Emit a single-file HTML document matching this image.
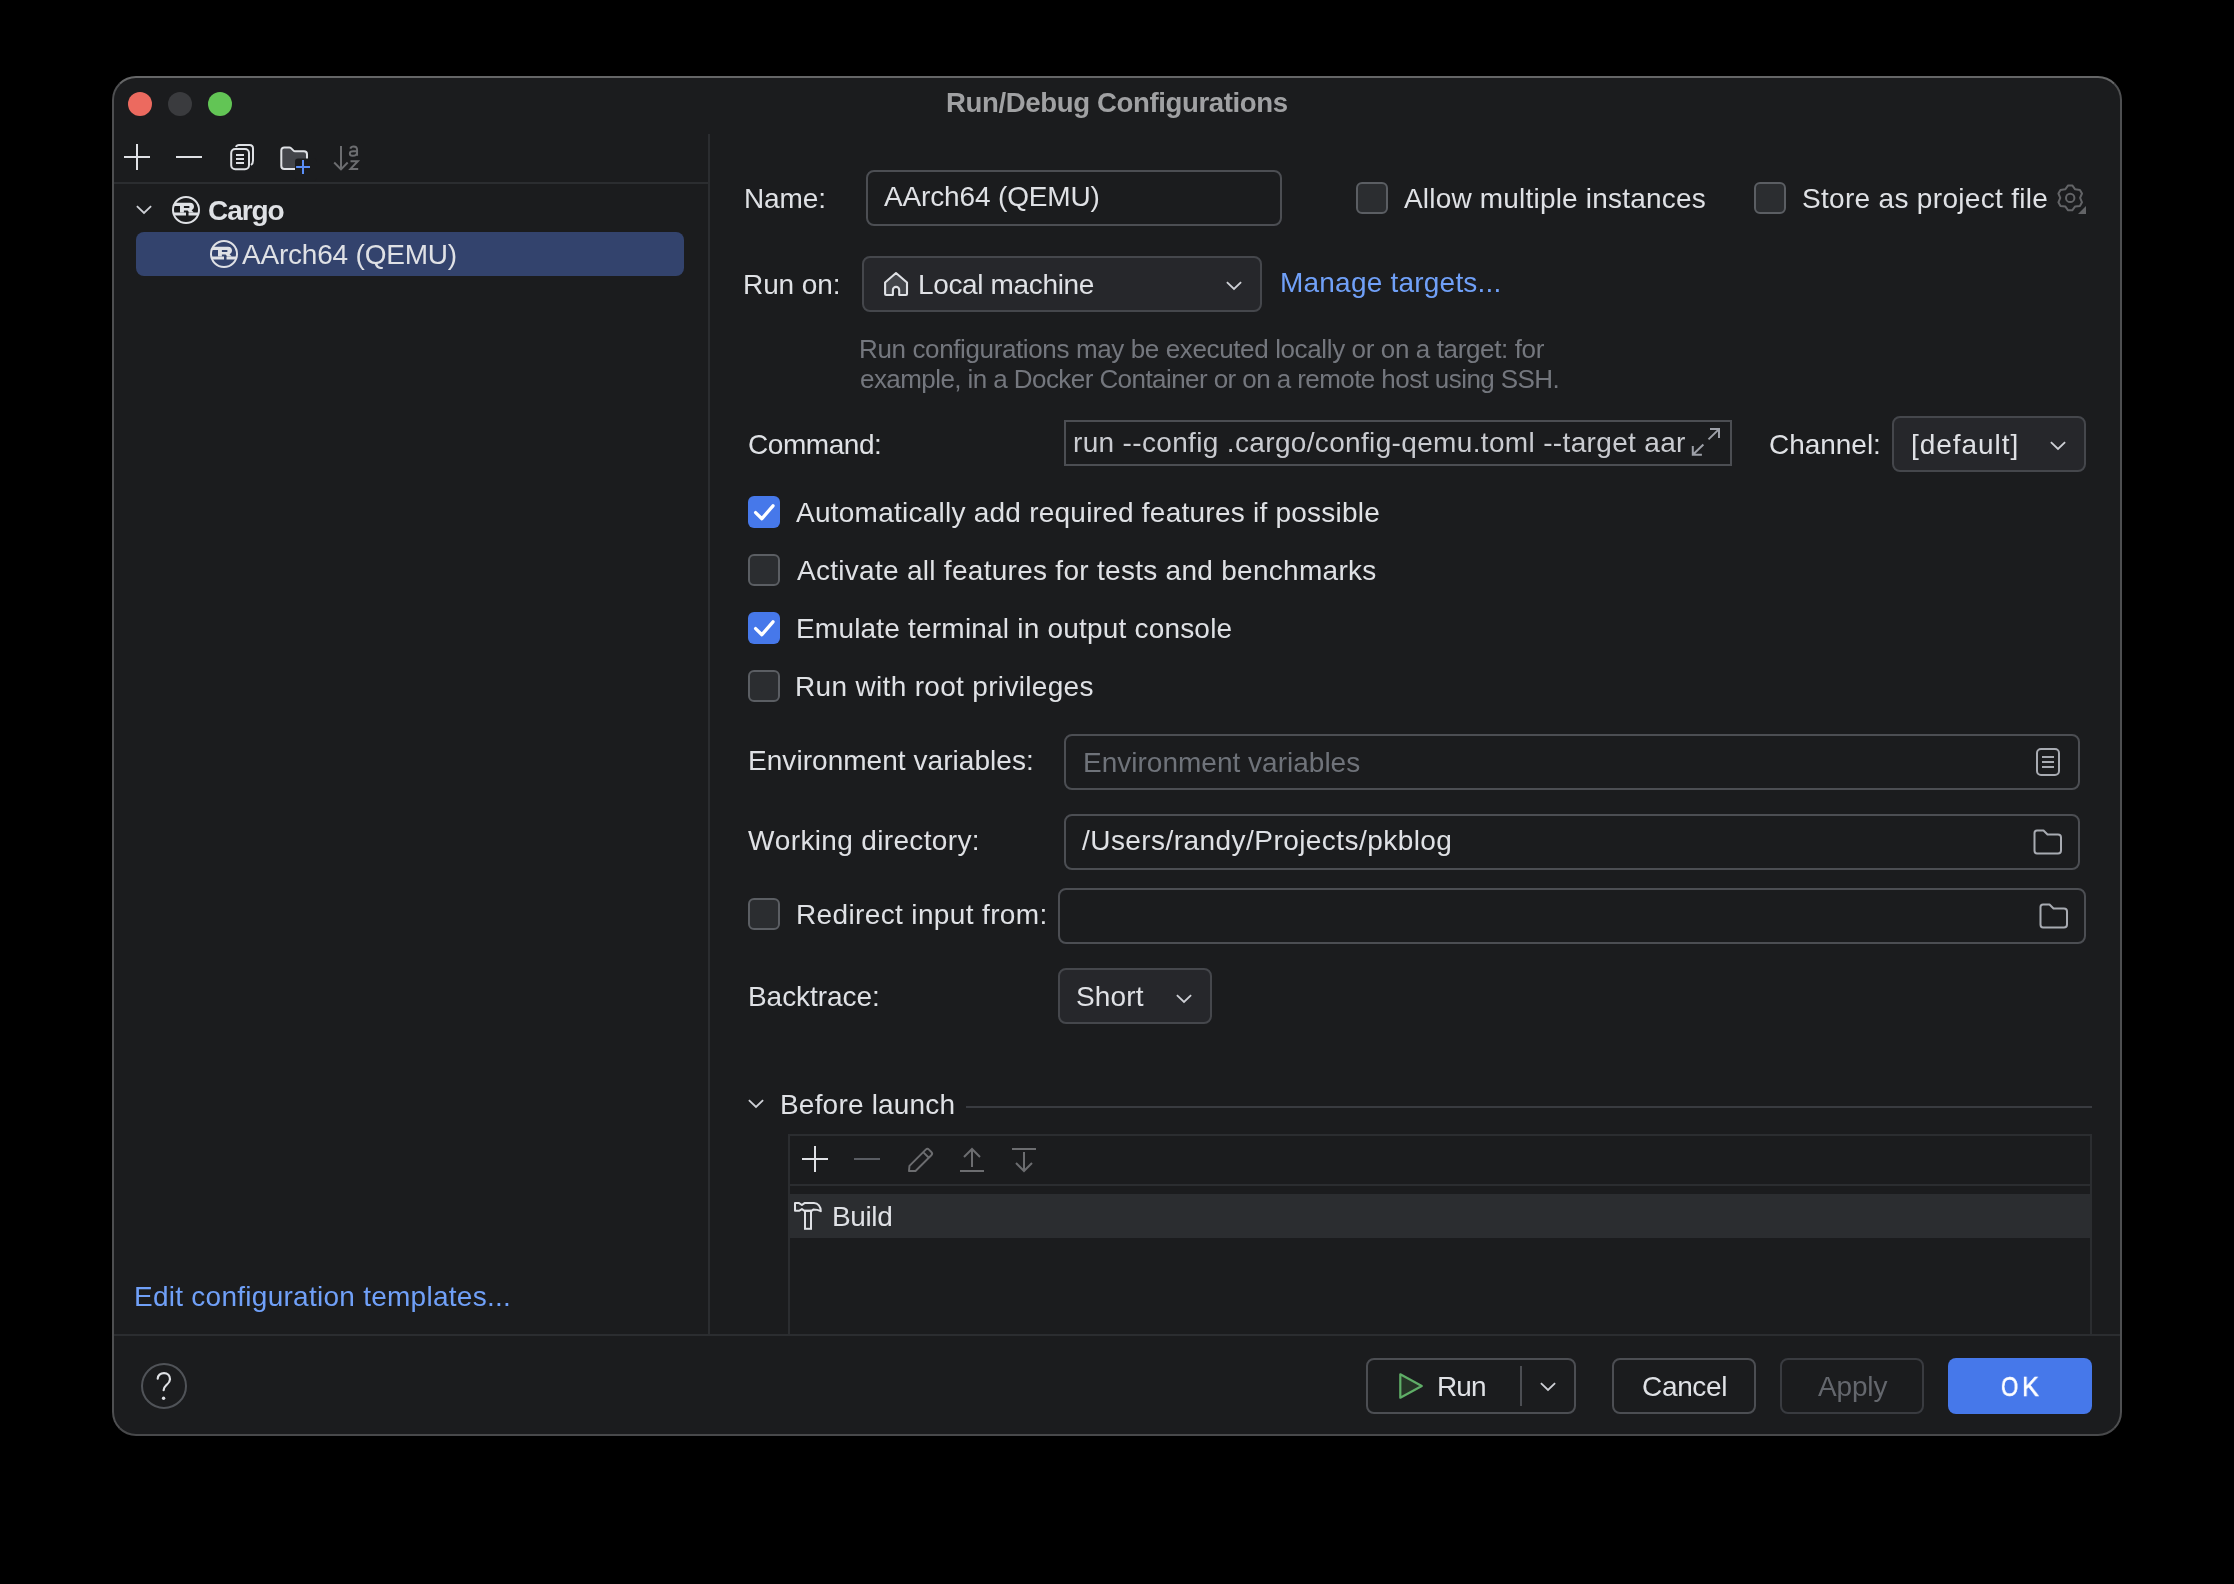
<!DOCTYPE html>
<html><head><meta charset="utf-8"><style>
html,body{margin:0;padding:0;background:#000;width:2234px;height:1584px;overflow:hidden;}
body{position:relative;font-family:"Liberation Sans",sans-serif;}
.t{position:absolute;white-space:pre;font-kerning:none;font-variant-ligatures:none;will-change:transform;}
.b{position:absolute;box-sizing:border-box;}
svg.b{overflow:visible;}
</style></head><body>
<div class="b" style="left:112px;top:76px;width:2010px;height:1360px;background:#1b1c1e;border:2px solid #4e4f51;border-radius:24px;border-top-color:#656667;border-bottom-color:#48494b;"></div>
<div class="b" style="left:128px;top:92px;width:24px;height:24px;background:#ec6a5f;border-radius:12px;"></div>
<div class="b" style="left:168px;top:92px;width:24px;height:24px;background:#3a3b3e;border-radius:12px;"></div>
<div class="b" style="left:208px;top:92px;width:24px;height:24px;background:#62c555;border-radius:12px;"></div>
<div class="t" style="left:945.95px;top:88.72px;font-size:27.6px;line-height:27.6px;font-weight:700;color:#a0a1a3;letter-spacing:-0.388px;">Run/Debug Configurations</div>
<div class="b" style="left:114px;top:182px;width:594px;height:2px;background:#2b2d30;border-radius:0px;"></div>
<div class="b" style="left:708px;top:134px;width:2px;height:1200px;background:#2b2d30;border-radius:0px;"></div>
<div class="b" style="left:114px;top:1334px;width:2006px;height:2px;background:#2b2d30;border-radius:0px;"></div>
<svg class="b" style="left:124px;top:144px" width="26" height="26" viewBox="0 0 26 26" fill="none"><path d="M13 0V26M0 13H26" stroke="#dfe1e5" stroke-width="2"/></svg>
<svg class="b" style="left:176px;top:144px" width="26" height="26" viewBox="0 0 26 26" fill="none"><path d="M0 13H26" stroke="#dfe1e5" stroke-width="2"/></svg>
<svg class="b" style="left:228px;top:142px" width="28" height="30" viewBox="0 0 28 30" fill="none"><rect x="3.2" y="7" width="17.8" height="20.2" rx="4" stroke="#dfe1e5" stroke-width="2"/><path d="M8 5C8.5 3.5 9.5 3 11 3H21.5C23.8 3 25 4.2 25 6.5V18.5C25 20.5 24.5 22 23 23" stroke="#dfe1e5" stroke-width="2"/><path d="M8 13H16M8 17H16M8 21H16" stroke="#dfe1e5" stroke-width="2"/></svg>
<svg class="b" style="left:276px;top:142px" width="40" height="40" viewBox="0 0 40 40" fill="none"><path d="M8.3 5.4H13.3C14 5.4 14.5 5.6 15 6.1L17.5 8.6C18 9.1 18.5 9.2 19 9.2H28C29.8 9.2 31 10.4 31 12.2V24C31 25.8 29.8 26.9 28 26.9H8.3C6.5 26.9 5.3 25.8 5.3 24V8.4C5.3 6.6 6.5 5.4 8.3 5.4Z" fill="#43454a" stroke="#dfe1e5" stroke-width="2"/><rect x="19" y="16.6" width="22" height="22" rx="3" fill="#1b1c1e"/><path d="M27 17.9V32.1M20.1 25H34" stroke="#5a8ef7" stroke-width="2"/></svg>
<svg class="b" style="left:330px;top:142px" width="32" height="32" viewBox="0 0 32 32" fill="none"><path d="M11 4V27.6M4.2 20.5L11 27.4L17.7 20.5" stroke="#6c6d70" stroke-width="2"/><path d="M20.5 19.2H27.8L20.5 26.9H28.2" stroke="#6c6d70" stroke-width="2"/><path d="M20.3 6.6C20.8 5.2 22 4.5 23.6 4.5C25.9 4.5 27.1 5.7 27.1 7.8V13.7M27 9.2H23.3C21 9.2 19.8 10.1 19.8 11.5C19.8 12.9 20.9 13.8 22.6 13.8C25 13.8 27 12.5 27 10.4" stroke="#6c6d70" stroke-width="1.9"/></svg>
<svg class="b" style="left:134.2px;top:203.4px" width="20" height="14" viewBox="0 0 20 14" fill="none"><path d="M2.9 3.1L10 10L17.1 3.1" stroke="#ced0d6" stroke-width="1.8"/></svg>
<svg class="b" style="left:167.8px;top:192px" width="36" height="36" viewBox="0 0 36 36" fill="none"><defs><clipPath id="rc210"><circle cx="18" cy="18" r="13"/></clipPath></defs><circle cx="18" cy="18" r="13" stroke="#dfe1e5" stroke-width="2"/><g clip-path="url(#rc210)" fill="#dfe1e5"><path d="M4 10.7H22C24.5 10.7 26 12.3 26 14.6C26 16.4 25 17.6 23.6 18.2L25.8 20.6H21.3L19.6 18.6H15.9V20.6H12V13.9H4Z M15.9 14V15.9H20.2C21 15.9 21.6 15.6 21.6 14.95C21.6 14.3 21 14 20.2 14Z" fill-rule="evenodd"/><path d="M2 20.6H18V23.6H2Z M20.5 20.6H34V23.6H20.5Z"/></g></svg>
<div class="t" style="left:207.65px;top:196.52px;font-size:28px;line-height:28px;font-weight:700;color:#dfe1e5;letter-spacing:-1.064px;">Cargo</div>
<div class="b" style="left:136px;top:232px;width:548px;height:44px;background:#33436d;border-radius:8px;"></div>
<svg class="b" style="left:205.8px;top:235.7px" width="36" height="36" viewBox="0 0 36 36" fill="none"><defs><clipPath id="rc253"><circle cx="18" cy="18" r="13"/></clipPath></defs><circle cx="18" cy="18" r="13" stroke="#dfe1e5" stroke-width="2"/><g clip-path="url(#rc253)" fill="#dfe1e5"><path d="M4 10.7H22C24.5 10.7 26 12.3 26 14.6C26 16.4 25 17.6 23.6 18.2L25.8 20.6H21.3L19.6 18.6H15.9V20.6H12V13.9H4Z M15.9 14V15.9H20.2C21 15.9 21.6 15.6 21.6 14.95C21.6 14.3 21 14 20.2 14Z" fill-rule="evenodd"/><path d="M2 20.6H18V23.6H2Z M20.5 20.6H34V23.6H20.5Z"/></g></svg>
<div class="t" style="left:242.15px;top:240.52px;font-size:28px;line-height:28px;font-weight:400;color:#dfe1e5;letter-spacing:-0.202px;">AArch64 (QEMU)</div>
<div class="t" style="left:133.60px;top:1282.52px;font-size:28px;line-height:28px;font-weight:400;color:#70a0f8;letter-spacing:0.263px;">Edit configuration templates...</div>
<svg class="b" style="left:138px;top:1360px" width="52" height="52" viewBox="0 0 52 52" fill="none"><circle cx="26" cy="26" r="22" stroke="#505358" stroke-width="2"/><path d="M19.7 18.7C19.7 15.3 22.5 13.1 26 13.1C29.5 13.1 32 15.7 32 19.2C32 22.2 30 23.6 28.2 25.2C26.5 26.7 25.6 27.8 25.6 30.2" stroke="#dfe1e5" stroke-width="2.2" stroke-linecap="round"/><circle cx="25.6" cy="38.2" r="1.7" fill="#dfe1e5"/></svg>
<div class="t" style="left:743.50px;top:184.52px;font-size:28px;line-height:28px;font-weight:400;color:#dfe1e5;letter-spacing:-0.129px;">Name:</div>
<div class="b" style="left:866px;top:170px;width:416px;height:56px;background:transparent;border:2px solid #4c4e53;border-radius:8px;"></div>
<div class="t" style="left:884.05px;top:182.52px;font-size:28px;line-height:28px;font-weight:400;color:#dfe1e5;letter-spacing:-0.148px;">AArch64 (QEMU)</div>
<div class="b" style="left:1356px;top:182px;width:32px;height:32px;background:#2b2d30;border:2px solid #5b5e63;border-radius:6px;"></div>
<div class="t" style="left:1404.05px;top:184.52px;font-size:28px;line-height:28px;font-weight:400;color:#dfe1e5;letter-spacing:0.192px;">Allow multiple instances</div>
<div class="b" style="left:1754px;top:182px;width:32px;height:32px;background:#2b2d30;border:2px solid #5b5e63;border-radius:6px;"></div>
<div class="t" style="left:1801.53px;top:184.52px;font-size:28px;line-height:28px;font-weight:400;color:#dfe1e5;letter-spacing:0.312px;">Store as project file</div>
<svg class="b" style="left:2050px;top:178px" width="40" height="40" viewBox="0 0 40 40" fill="none"><circle cx="20.2" cy="19.9" r="4.2" stroke="#636467" stroke-width="2"/><path d="M18.12 7.47L22.28 7.47L25.15 11.33L29.92 11.89L32.00 15.49L30.10 19.90L32.00 24.31L29.92 27.91L25.15 28.47L22.28 32.33L18.12 32.33L15.25 28.47L10.48 27.91L8.40 24.31L10.30 19.90L8.40 15.49L10.48 11.89L15.25 11.33Z" stroke="#636467" stroke-width="2" stroke-linejoin="round"/><path d="M36 28V36H28Z" fill="#636467"/></svg>
<div class="t" style="left:743.20px;top:270.52px;font-size:28px;line-height:28px;font-weight:400;color:#dfe1e5;letter-spacing:-0.086px;">Run on:</div>
<div class="b" style="left:862px;top:256px;width:400px;height:56px;background:#26272b;border:2px solid #45474c;border-radius:8px;"></div>
<svg class="b" style="left:875px;top:264px" width="40" height="40" viewBox="0 0 40 40" fill="none"><path d="M10.1 18.5L21 9L32 18.5V30Q32 31 31 31H24.2V26A3.15 3.15 0 0 0 17.9 26V31H11.1Q10.1 31 10.1 30Z" fill="#43454a" stroke="#dfe1e5" stroke-width="2.1" stroke-linejoin="round"/></svg>
<div class="t" style="left:917.60px;top:270.52px;font-size:28px;line-height:28px;font-weight:400;color:#dfe1e5;letter-spacing:-0.351px;">Local machine</div>
<svg class="b" style="left:1223.9px;top:279.2px" width="20" height="14" viewBox="0 0 20 14" fill="none"><path d="M2.9 3.1L10 10L17.1 3.1" stroke="#ced0d6" stroke-width="1.8"/></svg>
<div class="t" style="left:1279.70px;top:268.52px;font-size:28px;line-height:28px;font-weight:400;color:#70a0f8;letter-spacing:0.216px;">Manage targets...</div>
<div class="t" style="left:859.47px;top:336.02px;font-size:26px;line-height:26px;font-weight:400;color:#74777e;letter-spacing:-0.375px;">Run configurations may be executed locally or on a target: for</div>
<div class="t" style="left:859.60px;top:366.02px;font-size:26px;line-height:26px;font-weight:400;color:#74777e;letter-spacing:-0.573px;">example, in a Docker Container or on a remote host using SSH.</div>
<div class="t" style="left:747.58px;top:430.52px;font-size:28px;line-height:28px;font-weight:400;color:#dfe1e5;letter-spacing:-0.437px;">Command:</div>
<div class="b" style="left:1064px;top:420px;width:668px;height:46px;background:transparent;border:2px solid #4c4e53;border-radius:0px;"></div>
<div class="t" style="left:1073.34px;top:428.52px;font-size:28px;line-height:28px;font-weight:400;color:#c9cbd0;letter-spacing:0.342px;">run --config .cargo/config-qemu.toml --target aar</div>
<svg class="b" style="left:1685px;top:422px" width="40" height="40" viewBox="0 0 40 40" fill="none"><path d="M25 7.1H34V15.9M34 7.1L23.5 17.4M7.8 24V32.8H16.9M7.8 32.8L18.4 22.5" stroke="#9da0a8" stroke-width="2"/></svg>
<div class="t" style="left:1769.48px;top:430.52px;font-size:28px;line-height:28px;font-weight:400;color:#dfe1e5;letter-spacing:-0.029px;">Channel:</div>
<div class="b" style="left:1892px;top:416px;width:194px;height:56px;background:#26272b;border:2px solid #45474c;border-radius:8px;"></div>
<div class="t" style="left:1910.70px;top:430.52px;font-size:28px;line-height:28px;font-weight:400;color:#dfe1e5;letter-spacing:0.958px;">[default]</div>
<svg class="b" style="left:2047.9px;top:439.2px" width="20" height="14" viewBox="0 0 20 14" fill="none"><path d="M2.9 3.1L10 10L17.1 3.1" stroke="#ced0d6" stroke-width="1.8"/></svg>
<div class="b" style="left:748px;top:496px;width:32px;height:32px;background:#4678ea;border-radius:6px;"></div>
<svg class="b" style="left:748px;top:496px" width="32" height="32" viewBox="0 0 32 32" fill="none"><path d="M7.6 16.6L13.9 22.7L25 9.8" stroke="#ffffff" stroke-width="3.3" stroke-linecap="round" stroke-linejoin="round"/></svg>
<div class="t" style="left:796.05px;top:498.52px;font-size:28px;line-height:28px;font-weight:400;color:#dfe1e5;letter-spacing:0.242px;">Automatically add required features if possible</div>
<div class="b" style="left:748px;top:554px;width:32px;height:32px;background:#2b2d30;border:2px solid #5b5e63;border-radius:6px;"></div>
<div class="t" style="left:796.65px;top:556.52px;font-size:28px;line-height:28px;font-weight:400;color:#dfe1e5;letter-spacing:0.284px;">Activate all features for tests and benchmarks</div>
<div class="b" style="left:748px;top:612px;width:32px;height:32px;background:#4678ea;border-radius:6px;"></div>
<svg class="b" style="left:748px;top:612px" width="32" height="32" viewBox="0 0 32 32" fill="none"><path d="M7.6 16.6L13.9 22.7L25 9.8" stroke="#ffffff" stroke-width="3.3" stroke-linecap="round" stroke-linejoin="round"/></svg>
<div class="t" style="left:795.60px;top:614.52px;font-size:28px;line-height:28px;font-weight:400;color:#dfe1e5;letter-spacing:0.199px;">Emulate terminal in output console</div>
<div class="b" style="left:748px;top:670px;width:32px;height:32px;background:#2b2d30;border:2px solid #5b5e63;border-radius:6px;"></div>
<div class="t" style="left:795.40px;top:672.52px;font-size:28px;line-height:28px;font-weight:400;color:#dfe1e5;letter-spacing:0.326px;">Run with root privileges</div>
<div class="t" style="left:747.60px;top:746.52px;font-size:28px;line-height:28px;font-weight:400;color:#dfe1e5;letter-spacing:0.045px;">Environment variables:</div>
<div class="b" style="left:1064px;top:734px;width:1016px;height:56px;background:transparent;border:2px solid #4c4e53;border-radius:8px;"></div>
<div class="t" style="left:1082.70px;top:748.52px;font-size:28px;line-height:28px;font-weight:400;color:#6f737a;letter-spacing:0.009px;">Environment variables</div>
<svg class="b" style="left:2030px;top:744px" width="36" height="36" viewBox="0 0 36 36" fill="none"><rect x="7" y="5" width="22" height="26" rx="4" stroke="#a8abb2" stroke-width="2"/><path d="M12 13.1H24M12 18H24M12 23H24" stroke="#a8abb2" stroke-width="2"/></svg>
<div class="t" style="left:747.98px;top:826.52px;font-size:28px;line-height:28px;font-weight:400;color:#dfe1e5;letter-spacing:0.351px;">Working directory:</div>
<div class="b" style="left:1064px;top:814px;width:1016px;height:56px;background:transparent;border:2px solid #4c4e53;border-radius:8px;"></div>
<div class="t" style="left:1082.00px;top:826.52px;font-size:28px;line-height:28px;font-weight:400;color:#dfe1e5;letter-spacing:0.444px;">/Users/randy/Projects/pkblog</div>
<svg class="b" style="left:2033px;top:829px" width="30" height="26" viewBox="0 0 30 26" fill="none"><path d="M4 1.5H10.5L14.5 5.5H25C27 5.5 28 6.5 28 8.5V21.5C28 23.5 27 24.5 25 24.5H4C2.5 24.5 1.5 23.5 1.5 21.5V4C1.5 2.5 2.5 1.5 4 1.5Z" stroke="#a8abb2" stroke-width="2" stroke-linejoin="round"/></svg>
<div class="b" style="left:748px;top:898px;width:32px;height:32px;background:#2b2d30;border:2px solid #5b5e63;border-radius:6px;"></div>
<div class="t" style="left:795.60px;top:900.52px;font-size:28px;line-height:28px;font-weight:400;color:#dfe1e5;letter-spacing:0.365px;">Redirect input from:</div>
<div class="b" style="left:1058px;top:888px;width:1028px;height:56px;background:transparent;border:2px solid #4c4e53;border-radius:8px;"></div>
<svg class="b" style="left:2039px;top:903px" width="30" height="26" viewBox="0 0 30 26" fill="none"><path d="M4 1.5H10.5L14.5 5.5H25C27 5.5 28 6.5 28 8.5V21.5C28 23.5 27 24.5 25 24.5H4C2.5 24.5 1.5 23.5 1.5 21.5V4C1.5 2.5 2.5 1.5 4 1.5Z" stroke="#a8abb2" stroke-width="2" stroke-linejoin="round"/></svg>
<div class="t" style="left:747.50px;top:982.52px;font-size:28px;line-height:28px;font-weight:400;color:#dfe1e5;letter-spacing:-0.058px;">Backtrace:</div>
<div class="b" style="left:1058px;top:968px;width:154px;height:56px;background:#26272b;border:2px solid #45474c;border-radius:8px;"></div>
<div class="t" style="left:1075.73px;top:982.52px;font-size:28px;line-height:28px;font-weight:400;color:#dfe1e5;letter-spacing:0.138px;">Short</div>
<svg class="b" style="left:1173.9px;top:991.6px" width="20" height="14" viewBox="0 0 20 14" fill="none"><path d="M2.9 3.1L10 10L17.1 3.1" stroke="#ced0d6" stroke-width="1.8"/></svg>
<svg class="b" style="left:745.9px;top:1097.2px" width="20" height="14" viewBox="0 0 20 14" fill="none"><path d="M2.9 3.1L10 10L17.1 3.1" stroke="#ced0d6" stroke-width="1.8"/></svg>
<div class="t" style="left:779.70px;top:1090.52px;font-size:28px;line-height:28px;font-weight:400;color:#dfe1e5;letter-spacing:0.194px;">Before launch</div>
<div class="b" style="left:966px;top:1106px;width:1126px;height:2px;background:#393b40;border-radius:0px;"></div>
<div class="b" style="left:788px;top:1134px;width:1304px;height:200px;background:transparent;border:2px solid #2b2d30;border-radius:0px;border-bottom:none;"></div>
<div class="b" style="left:790px;top:1184px;width:1300px;height:2px;background:#2b2d30;border-radius:0px;"></div>
<div class="b" style="left:790px;top:1194px;width:1300px;height:44px;background:#2b2d30;border-radius:0px;"></div>
<svg class="b" style="left:801px;top:1145px" width="28" height="28" viewBox="0 0 28 28" fill="none"><path d="M14 1V27M1 14H27" stroke="#dfe1e5" stroke-width="2"/></svg>
<svg class="b" style="left:853px;top:1145px" width="28" height="28" viewBox="0 0 28 28" fill="none"><path d="M1 14H27" stroke="#5a5d63" stroke-width="2"/></svg>
<svg class="b" style="left:906px;top:1145px" width="30" height="30" viewBox="0 0 30 30" fill="none"><g transform="translate(3 26) scale(0.93) translate(-3 -26)"><path d="M3 26H10L27 9C28 8 28 6.5 27 5.5L24.5 3C23.5 2 22 2 21 3L3.5 20.5Z M18.5 6L24 11.5" stroke="#6c6d70" stroke-width="2.1" stroke-linejoin="round"/></g></svg>
<svg class="b" style="left:958px;top:1146px" width="28" height="28" viewBox="0 0 28 28" fill="none"><path d="M14 3V21M6 11L14 3L22 11M2 25H26" stroke="#6c6d70" stroke-width="2"/></svg>
<svg class="b" style="left:1010px;top:1146px" width="28" height="28" viewBox="0 0 28 28" fill="none"><path d="M14 6V25M6 17L14 25L22 17M2 3H26" stroke="#6c6d70" stroke-width="2"/></svg>
<svg class="b" style="left:788px;top:1196px" width="40" height="40" viewBox="0 0 40 40" fill="none"><path d="M7 7.1H11L13.9 9L16.5 7.1H26C30 7.1 32.8 10.5 32.8 15.2C31 14.3 29 13.6 25.3 13.6L23.8 14.8H16.3L13.9 13.1L11 14.8H7Z" stroke="#dfe1e5" stroke-width="2" stroke-linejoin="round"/><rect x="17" y="14.8" width="6" height="18" stroke="#dfe1e5" stroke-width="2"/></svg>
<div class="t" style="left:831.60px;top:1202.52px;font-size:28px;line-height:28px;font-weight:400;color:#dfe1e5;letter-spacing:-0.365px;">Build</div>
<div class="b" style="left:1366px;top:1358px;width:210px;height:56px;background:transparent;border:2px solid #4c4e53;border-radius:8px;"></div>
<div class="b" style="left:1520px;top:1366px;width:2px;height:40px;background:#4c4e53;border-radius:0px;"></div>
<svg class="b" style="left:1397px;top:1371px" width="28" height="30" viewBox="0 0 28 30" fill="none"><path d="M3.3 3.3L24.8 15L3.3 26.7Z" fill="#263427" stroke="#5fae67" stroke-width="2.2" stroke-linejoin="round"/></svg>
<div class="t" style="left:1436.70px;top:1372.52px;font-size:28px;line-height:28px;font-weight:400;color:#dfe1e5;letter-spacing:-0.925px;">Run</div>
<svg class="b" style="left:1538px;top:1379.8px" width="20" height="14" viewBox="0 0 20 14" fill="none"><path d="M2.9 3.1L10 10L17.1 3.1" stroke="#ced0d6" stroke-width="1.8"/></svg>
<div class="b" style="left:1612px;top:1358px;width:144px;height:56px;background:transparent;border:2px solid #4c4e53;border-radius:8px;"></div>
<div class="t" style="left:1641.68px;top:1372.52px;font-size:28px;line-height:28px;font-weight:400;color:#dfe1e5;letter-spacing:-0.333px;">Cancel</div>
<div class="b" style="left:1780px;top:1358px;width:144px;height:56px;background:transparent;border:2px solid #393b40;border-radius:8px;"></div>
<div class="t" style="left:1818.35px;top:1372.52px;font-size:28px;line-height:28px;font-weight:400;color:#64676d;letter-spacing:-0.158px;">Apply</div>
<div class="b" style="left:1948px;top:1358px;width:144px;height:56px;background:#4678ea;border-radius:8px;"></div>
<div class="t" style="left:2001.27px;top:1372.52px;font-size:28px;line-height:28px;font-weight:400;color:#ffffff;letter-spacing:0.000px;-webkit-text-stroke:0.6px #ffffff;transform:scaleX(0.79);transform-origin:0 0;">O</div>
<div class="t" style="left:2022.20px;top:1372.52px;font-size:28px;line-height:28px;font-weight:400;color:#ffffff;letter-spacing:0.000px;-webkit-text-stroke:0.6px #ffffff;transform:scaleX(0.9);transform-origin:0 0;">K</div>
</body></html>
